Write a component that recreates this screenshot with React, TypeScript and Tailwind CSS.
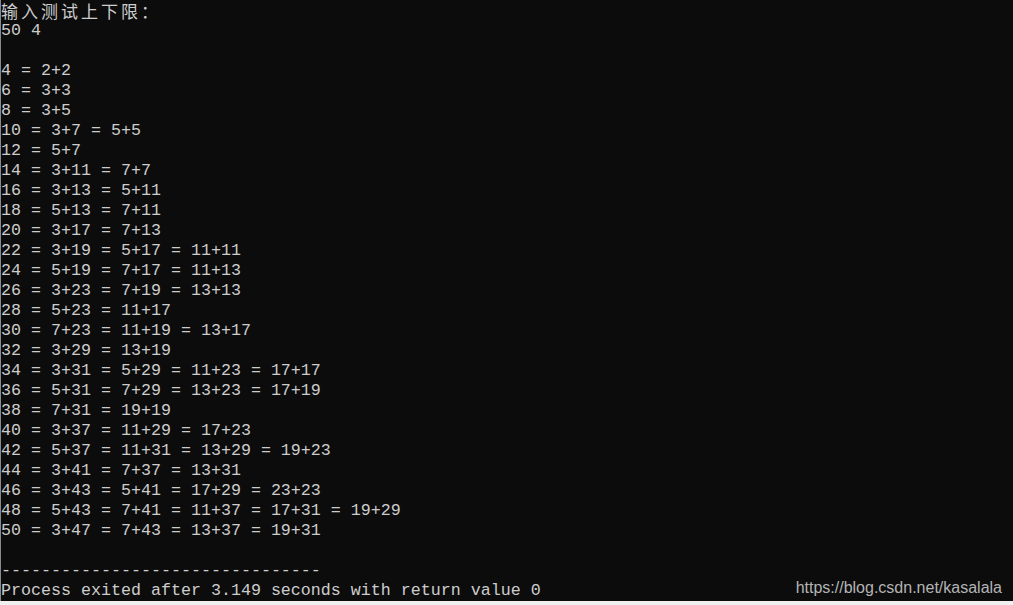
import React from "react";

const lines: string[] = [
  "50 4",
  "",
  "4 = 2+2",
  "6 = 3+3",
  "8 = 3+5",
  "10 = 3+7 = 5+5",
  "12 = 5+7",
  "14 = 3+11 = 7+7",
  "16 = 3+13 = 5+11",
  "18 = 5+13 = 7+11",
  "20 = 3+17 = 7+13",
  "22 = 3+19 = 5+17 = 11+11",
  "24 = 5+19 = 7+17 = 11+13",
  "26 = 3+23 = 7+19 = 13+13",
  "28 = 5+23 = 11+17",
  "30 = 7+23 = 11+19 = 13+17",
  "32 = 3+29 = 13+19",
  "34 = 3+31 = 5+29 = 11+23 = 17+17",
  "36 = 5+31 = 7+29 = 13+23 = 17+19",
  "38 = 7+31 = 19+19",
  "40 = 3+37 = 11+29 = 17+23",
  "42 = 5+37 = 11+31 = 13+29 = 19+23",
  "44 = 3+41 = 7+37 = 13+31",
  "46 = 3+43 = 5+41 = 17+29 = 23+23",
  "48 = 5+43 = 7+41 = 11+37 = 17+31 = 19+29",
  "50 = 3+47 = 7+43 = 13+37 = 19+31",
  "",
  "--------------------------------",
  "Process exited after 3.149 seconds with return value 0",
];

export default function App() {
  return (
    <div className="w-[1013px] h-[605px] flex flex-col bg-[#f0f0f0] overflow-hidden">
      <div className="relative h-[601px] pt-[1px] bg-[#0c0c0c] border-l border-[#8a8a8a] text-[#cccccc] overflow-hidden">
        <div className="h-[20px] leading-[20px] text-[17px] tracking-[3px] whitespace-pre [font-family:'Noto_Sans_CJK_SC','Liberation_Mono',monospace]">
          输入测试上下限：
        </div>
        {lines.map((l, i) => (
          <div
            key={i}
            className="h-[20px] leading-[20px] text-[16.67px] whitespace-pre [font-family:'Liberation_Mono',monospace]"
          >
            {l}
          </div>
        ))}
        <div className="absolute right-[11px] bottom-[3px] text-[16px] leading-[20px] text-[#b4b4b4] [font-family:'Liberation_Sans',Arial,sans-serif]">
          https://blog.csdn.net/kasalala
        </div>
      </div>
    </div>
  );
}
